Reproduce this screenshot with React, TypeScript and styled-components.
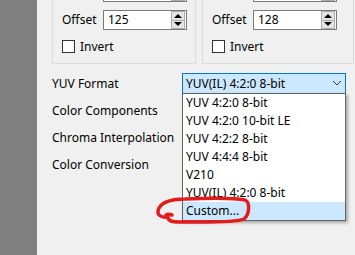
import styled, { createGlobalStyle } from 'styled-components';

const GlobalStyle = createGlobalStyle`
  html, body {
    margin: 0;
    padding: 0;
    width: 355px;
    height: 255px;
    overflow: hidden;
    background: #f0f0f0;
    font-family: 'Segoe UI', 'Noto Sans', sans-serif;
    font-size: 12px;
    color: #000;
  }
`;

const Page = styled.div`
  display: flex;
  width: 355px;
  height: 255px;
  position: relative;
  overflow: hidden;
`;

const Sidebar = styled.div`
  width: 37px;
  flex-shrink: 0;
  background: #808080;
`;

const Content = styled.div`
  flex: 1;
  padding-left: 15px;
  display: flex;
  flex-direction: column;
`;

const Groups = styled.div`
  display: flex;
  gap: 6px;
  margin-top: -18px;
`;

const GroupBox = styled.div<{ $width: number }>`
  width: ${p => p.$width}px;
  box-sizing: border-box;
  border: 1px solid #dcdcdc;
  border-top: none;
  padding: 0 0 10px 9px;
  display: flex;
  flex-direction: column;
  gap: 8px;
`;

const FieldRow = styled.div<{ $labelWidth: number }>`
  display: flex;
  align-items: center;
  height: 20px;
  padding-left: ${p => p.$labelWidth}px;
  position: relative;
`;

const Label = styled.span`
  position: absolute;
  left: 0;
  line-height: 20px;
`;

const SpinBox = styled.div<{ $width: number }>`
  width: ${p => p.$width}px;
  height: 20px;
  box-sizing: border-box;
  border: 1px solid #7a7a7a;
  background: #fff;
  display: flex;
  align-items: center;
`;

const SpinValue = styled.span`
  flex: 1;
  padding-left: 4px;
  line-height: 18px;
`;

const SpinButtons = styled.div`
  width: 14px;
  height: 18px;
  box-sizing: border-box;
  border: 1px solid #adadad;
  background: #e5e5e5;
  display: flex;
  flex-direction: column;
  margin-right: 1px;
`;

const SpinButton = styled.div<{ $split?: boolean }>`
  flex: 1;
  display: flex;
  align-items: center;
  justify-content: center;
  ${p => (p.$split ? 'border-top: 1px solid #adadad;' : '')}
`;

const Arrow = styled.div<{ $up?: boolean }>`
  width: 0;
  height: 0;
  border-left: 4px solid transparent;
  border-right: 4px solid transparent;
  ${p => (p.$up ? 'border-bottom: 4px solid #000;' : 'border-top: 4px solid #000;')}
`;

const CheckRow = styled.label`
  display: flex;
  align-items: center;
  gap: 5px;
  height: 13px;
  margin-top: 2px;
`;

const CheckBox = styled.span`
  width: 13px;
  height: 13px;
  box-sizing: border-box;
  border: 1px solid #333;
  background: #fff;
`;

const Settings = styled.div`
  margin-top: 9px;
  display: flex;
  flex-direction: column;
  gap: 7px;
`;

const SettingRow = styled.div`
  display: flex;
  align-items: center;
  height: 20px;
`;

const SettingLabel = styled.span`
  width: 130px;
  flex-shrink: 0;
`;

const ComboWrap = styled.div`
  position: relative;
`;

const Combo = styled.div`
  width: 164px;
  height: 21px;
  box-sizing: border-box;
  border: 1px solid #0078d7;
  background: #cce8ff;
  display: flex;
  align-items: center;
  justify-content: space-between;
  padding: 0 3px 0 3px;
`;

const DropList = styled.div`
  position: absolute;
  top: 20px;
  left: 0;
  width: 164px;
  box-sizing: border-box;
  border: 1px solid #646464;
  background: #fff;
  box-shadow: 2px 2px 3px rgba(0, 0, 0, 0.3);
  z-index: 2;
`;

const DropItem = styled.div<{ $active?: boolean }>`
  height: 18px;
  line-height: 18px;
  padding-left: 3px;
  background: ${p => (p.$active ? '#cce8ff' : '#fff')};
`;

const Scribble = styled.svg`
  position: absolute;
  left: 150px;
  top: 194px;
  z-index: 3;
  pointer-events: none;
`;

const options = [
  'YUV 4:2:0 8-bit',
  'YUV 4:2:0 10-bit LE',
  'YUV 4:2:2 8-bit',
  'YUV 4:4:4 8-bit',
  'V210',
  'YUV(IL) 4:2:0 8-bit',
  'Custom...',
];

const Spin = ({ value, width }: { value: string; width: number }) => (
  <SpinBox $width={width}>
    <SpinValue>{value}</SpinValue>
    <SpinButtons>
      <SpinButton>
        <Arrow $up />
      </SpinButton>
      <SpinButton $split>
        <Arrow />
      </SpinButton>
    </SpinButtons>
  </SpinBox>
);

const Group = ({ width, offset, labelWidth, spinWidth }: { width: number; offset: string; labelWidth: number; spinWidth: number }) => (
  <GroupBox $width={width}>
    <FieldRow $labelWidth={labelWidth}>
      <Spin value="" width={spinWidth} />
    </FieldRow>
    <FieldRow $labelWidth={labelWidth}>
      <Label>Offset</Label>
      <Spin value={offset} width={spinWidth} />
    </FieldRow>
    <CheckRow>
      <CheckBox />
      Invert
    </CheckRow>
  </GroupBox>
);

export default function App() {
  return (
    <>
      <GlobalStyle />
      <Page>
        <Sidebar />
        <Content>
          <Groups>
            <Group width={144} offset="125" labelWidth={41} spinWidth={84} />
            <Group width={152} offset="128" labelWidth={41} spinWidth={84} />
          </Groups>
          <Settings>
            <SettingRow>
              <SettingLabel>YUV Format</SettingLabel>
              <ComboWrap>
                <Combo>
                  <span>YUV(IL) 4:2:0 8-bit</span>
                  <svg width="10" height="6" viewBox="0 0 10 6">
                    <path d="M1 1 L5 5 L9 1" fill="none" stroke="#333" strokeWidth="1" />
                  </svg>
                </Combo>
                <DropList>
                  {options.map((o, i) => (
                    <DropItem key={o} $active={i === options.length - 1}>
                      {o}
                    </DropItem>
                  ))}
                </DropList>
              </ComboWrap>
            </SettingRow>
            <SettingRow>
              <SettingLabel>Color Components</SettingLabel>
            </SettingRow>
            <SettingRow>
              <SettingLabel>Chroma Interpolation</SettingLabel>
            </SettingRow>
            <SettingRow>
              <SettingLabel>Color Conversion</SettingLabel>
            </SettingRow>
          </Settings>
        </Content>
        <Scribble width="105" height="32" viewBox="0 0 105 32">
          <path
            d="M22 21 C16 19 14 22 18 23 C10 24 6 20 9 14 C13 7 22 5 35 5 C60 4 85 4 95 6 C100 8 100 20 94 25 C85 29 50 28 30 28 C22 28 18 27 18 23"
            fill="none"
            stroke="#e31b1b"
            strokeWidth="3.5"
            strokeLinecap="round"
            strokeLinejoin="round"
          />
        </Scribble>
      </Page>
    </>
  );
}
